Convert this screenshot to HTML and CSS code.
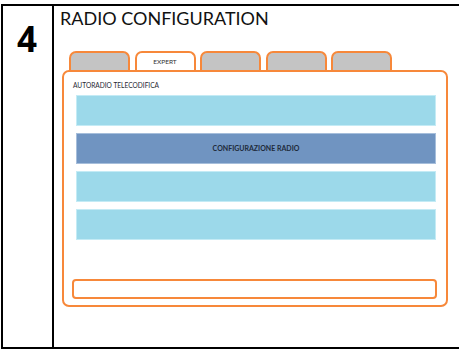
FILE: index.html
```html
<!DOCTYPE html>
<html>
<head>
<meta charset="utf-8">
<link rel="stylesheet" href="styles.css">
</head>
<body>
<div class="sheet">
  <div class="num">4</div>
  <div class="content">
    <div class="title">RADIO CONFIGURATION</div>
    <div class="tabs">
      <div class="tab"></div>
      <div class="tab active">EXPERT</div>
      <div class="tab"></div>
      <div class="tab"></div>
      <div class="tab"></div>
    </div>
    <div class="panel">
      <div class="label">AUTORADIO TELECODIFICA</div>
      <div class="bar light"></div>
      <div class="bar dark">CONFIGURAZIONE RADIO</div>
      <div class="bar light"></div>
      <div class="bar light"></div>
      <div class="input"></div>
    </div>
  </div>
</div>
</body>
</html>
```
FILE: styles.css
```css
html, body {
  margin: 0;
  padding: 0;
  background: #fff;
  overflow: hidden;
  width: 459px;
  height: 352px;
}
.sheet {
  margin: 4px 0 0 1px;
  width: 480px;
  height: 345px;
  box-sizing: border-box;
  border: 2px solid #000;
  border-right: none;
  display: flex;
}
.num {
  width: 51px;
  flex: none;
  box-sizing: border-box;
  border-right: 2px solid #000;
  font-family: "Open Sans", sans-serif;
  font-weight: bold;
  font-size: 35px;
  line-height: 40px;
  text-align: center;
  color: #000;
  padding-top: 13px;
  padding-right: 1px;
}
.content {
  flex: 1;
  display: flex;
  flex-direction: column;
  padding-left: 6px;
}
.title {
  font-family: Lato, "Open Sans", sans-serif;
  font-size: 18px;
  line-height: 22px;
  height: 22px;
  margin-top: 1px;
  color: #111;
}
.tabs {
  display: flex;
  gap: 4.5px;
  margin-top: 22px;
  margin-left: 9px;
  height: 19px;
}
.tab {
  width: 61px;
  height: 19px;
  box-sizing: border-box;
  border: 2px solid #f7883a;
  border-bottom: none;
  border-radius: 7px 7px 0 0;
  background: #c4c4c4;
  font-family: Lato, sans-serif;
  font-size: 6.5px;
  line-height: 17px;
  text-align: center;
  color: #333;
}
.tab.active {
  background: #fff;
}
.panel {
  margin-left: 2px;
  width: 386px;
  height: 237px;
  box-sizing: border-box;
  border: 2px solid #f7883a;
  border-radius: 7px;
  display: flex;
  flex-direction: column;
}
.label {
  font-family: Lato, sans-serif;
  font-size: 6.6px;
  line-height: 10px;
  margin-top: 8px;
  margin-left: 9px;
  color: #1f2733;
}
.bar {
  margin-left: 12px;
  width: 360px;
  height: 31px;
  box-sizing: border-box;
  flex: none;
}
.bar + .bar {
  margin-top: 7px;
}
.label + .bar {
  margin-top: 5px;
}
.light {
  background: #9cd9ea;
  border: 1px solid #c4ebf5;
}
.dark {
  background: #7094c1;
  border: 1px solid #a6bedb;
  font-family: Lato, sans-serif;
  font-weight: bold;
  font-size: 7px;
  line-height: 29px;
  text-align: center;
  color: #1e2a3a;
}
.input {
  margin-top: auto;
  margin-left: 8px;
  margin-bottom: 6px;
  width: 365px;
  height: 20px;
  box-sizing: border-box;
  border: 2px solid #f7883a;
  border-radius: 4px;
}
```
